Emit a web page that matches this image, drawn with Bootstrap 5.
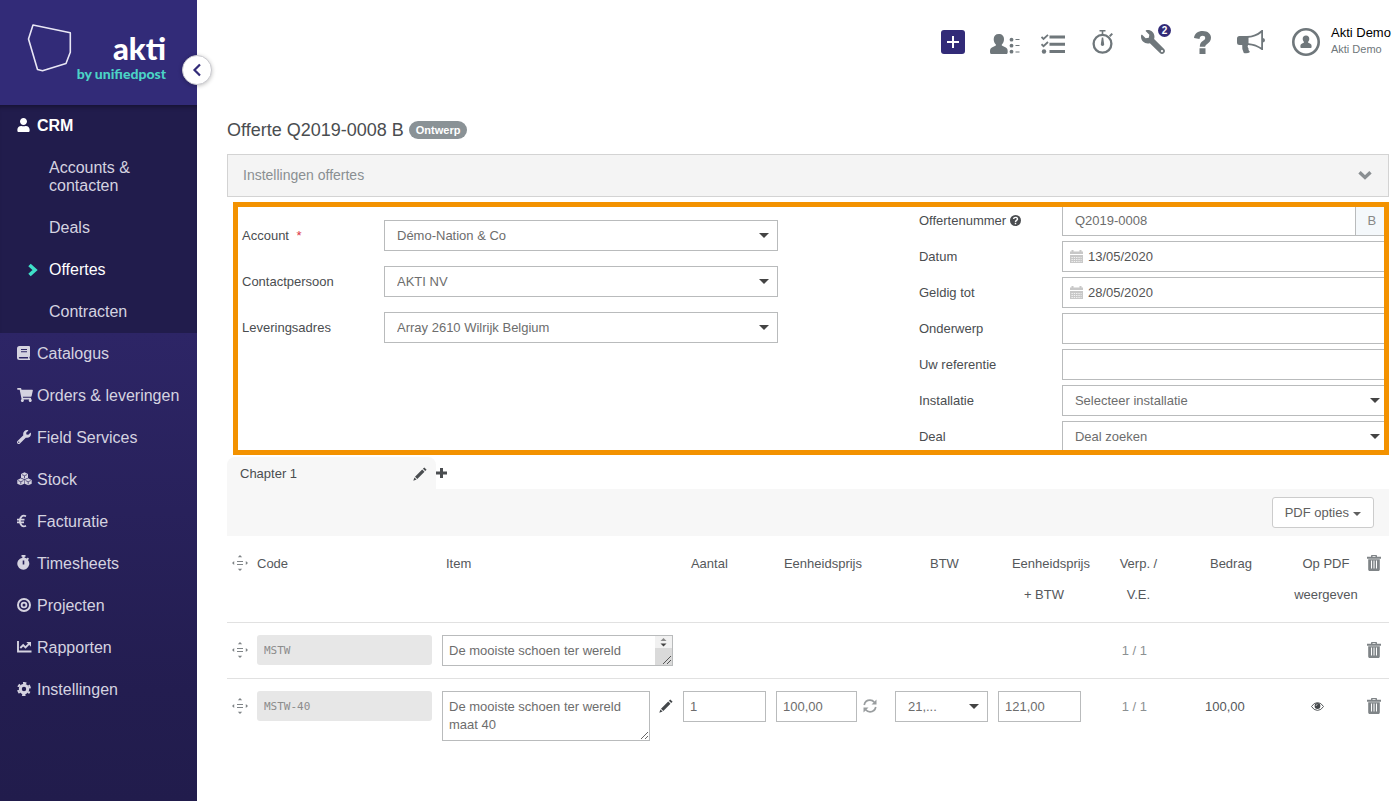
<!DOCTYPE html>
<html lang="nl">
<head>
<meta charset="utf-8">
<meta name="viewport" content="width=device-width, initial-scale=1">
<title>Offerte Q2019-0008 B</title>
<link rel="stylesheet" href="https://cdn.jsdelivr.net/npm/bootstrap@5.3.0/dist/css/bootstrap.min.css">
<style>
  body { font-family: "Liberation Sans", Arial, sans-serif; font-size: 13px; line-height: 18px; color: #4a4d50; background: #fff; }
  svg { display: block; fill: currentColor; }

  /* Sidebar */
  .side { flex: 0 0 197px; background: linear-gradient(#322b78 0, #2d2566 333px, #231d50 690px, #211c4c 100%); font-size: 16px; }
  .side-brand { height: 105px; padding-right: 31px; background: #322b78; color: #fff; font-family: Lato, sans-serif; }
  .brand-shape { left: 27px; top: 23px; }
  .brand-name { padding-top: 30px; font-size: 31px; line-height: 36px; font-weight: 900; }
  .brand-sub { font-size: 14px; line-height: 16px; font-weight: 900; color: #4bd3c6; }
  .side-toggle { left: 182px; top: 55px; width: 30px; height: 30px; color: #322b78; border: 1px solid #c9c9cf; box-shadow: 0 1px 4px rgba(0,0,0,.25); z-index: 2; }
  .side a { display: flex; align-items: center; padding: 12px 10px 12px 17px; color: #d5d3e0; text-decoration: none; }
  .side a svg { flex: none; margin-right: auto; margin-bottom: 3px; }
  .side a span { flex: 0 0 150px; }
  .side-sub { background: #211c4c; box-shadow: inset 0 5px 4px -3px rgba(0,0,0,.35); }
  .side .side-sub a { color: #d5d3e0; }
  .side .side-sub .active { color: #fff; }
  .side .side-sub .side-leaf { padding-left: 27px; }
  .side .side-leaf svg { margin-bottom: 0; }
  .side .side-leaf span { flex-basis: 138px; }
  .side .side-leaf.two-line { padding-right: 50px; }
  .side .side-leaf.two-line span { flex-basis: 98px; }

  /* Top bar */
  .topbar { height: 84px; padding-right: 6px; color: #6f777b; }
  .top-btn { width: 50px; height: 30px; padding: 0; border: 0; background: none; color: inherit; display: flex; align-items: center; justify-content: center; position: relative; }
  .top-plus { width: 24px; height: 24px; background: #322b78; color: #fff; border-radius: 3px; display: grid; place-items: center; }
  .top-count { position: absolute; left: 30px; top: -3px; width: 13px; height: 13px; line-height: 13px; font-size: 10px; background: #322b78; }
  .who { margin-left: 14px; gap: 11px; font-size: 11px; line-height: 16px; color: #6f777b; text-decoration: none; }
  .who span { padding-bottom: 2px; }
  .who b { display: block; font-size: 13px; font-weight: 400; color: #000; line-height: 16px; }

  /* Content */
  .content { padding: 36px 8px 24px 30px; }
  .title { font-size: 18px; line-height: 20px; margin: 0 0 14px; font-weight: 400; color: #4a4d50; }
  .state { font-size: 11px; line-height: 18px; padding: 0 7px; background: #8a9296; margin-left: 5px; }
  .panel-head { height: 43px; padding: 0 16px 2px 15px; background: #f4f4f4; border: 1px solid #d3d3d3; border-radius: 0; color: #8a8f92; font-size: 14px; }
  .frame { margin: 5px 0 2px 6px; border: 5px solid #f39200; overflow: hidden; }
  .frame-grid { display: grid; grid-template-columns: 536fr 141fr 470fr; margin: -2px -5px -2px 4px; }
  .fields { display: grid; align-items: center; align-content: start; }
  .fields-left { grid-template-columns: 142px 1fr; row-gap: 15px; padding-top: 15px; }
  .fields-right { grid-column: 3; grid-template-columns: 143px 1fr; row-gap: 5px; }

  .form-control, .form-select { height: 31px; border: 1px solid #b9bbbc; border-radius: 0; font-size: 13px; line-height: 18px; padding: 5px 12px; color: #6d6d6d; background-color: #fff; }
  .form-select { padding-right: 30px; background-position: right 8px center; background-size: 10px 5px;
    background-image: url("data:image/svg+xml,%3Csvg xmlns='http://www.w3.org/2000/svg' viewBox='0 0 10 5'%3E%3Cpath fill='%23444' d='M0 0h10L5 5z'/%3E%3C/svg%3E"); }
  .input-group-text { width: 34px; padding: 0; justify-content: center; border: 1px solid #b9bbbc; border-radius: 0; background: #f4f8fb; color: #888; font-size: 13px; }
  .date-box .form-control { padding-left: 25px; color: #555; }
  .date-box svg { position: absolute; left: 8px; top: 9px; color: #c8c8c8; }

  /* Chapter tabs */
  .chapter { width: 209px; height: 32px; padding: 2px 9px 0 13px; background: #f7f7f7; border-radius: 8px 8px 0 0; }
  .plain { border: 0; padding: 0; background: none; color: inherit; }
  .toolbar { padding: 8px 15px; background: #f7f7f7; }
  .pdf-btn { height: 31px; padding: 0 12px; font-size: 13px; line-height: 18px; background: #fff; border: 1px solid #ccc; border-radius: 3px; color: #606060; }
  .pdf-btn::after { margin-left: 4px; border-top-width: 4px; border-left-width: 4px; border-right-width: 4px; vertical-align: 1px; }

  /* Lines */
  .lines { width: 100%; table-layout: fixed; color: #55585b; }
  .lines th { font-weight: 400; line-height: 31px; text-align: center; vertical-align: top; padding: 12px 0; }
  .lines th.price-incl { padding-left: 14px; padding-right: 31px; }
  .lines td { padding: 12px 0; vertical-align: top; line-height: 31px; }
  .lines tr { border-bottom: 1px solid #e1e1e1; }
  .lines tbody tr:last-child { border-bottom: 0; }
  .lines svg { color: #7f8487; }
  .lines .cell-icon { display: flex; height: 30px; width: 100%; align-items: center; justify-content: center; }
  .lines .cell-drag { width: 26px; }
  .lines .form-control { padding: 5px 6px; line-height: 18px; }
  .lines td.field { padding-right: 10px; }
  .lines .code { height: 30px; border: 0; border-radius: 3px; background: #e7e7e7; padding: 0 7px; font: 11px "DejaVu Sans Mono", monospace; color: #8c8c8c; }
  .lines textarea.form-control { min-height: 31px; padding-top: 6px; resize: both; }
  .lines textarea.one { height: 31px; padding-bottom: 4px; padding-right: 20px; overflow: hidden; resize: none; }
  .lines textarea.two { height: 50px; width: 208px; padding-bottom: 4px; flex: none; }
  .scroller { position: absolute; top: 1px; right: 1px; bottom: 1px; width: 17px; background: linear-gradient(#f1f1f1 12px, #dadada 12px); }
  .lines .dark svg { color: #43474a; }
  .lines .price { width: 81px; flex: none; }
  .lines .price-wide { width: 83px; }
  .muted { color: #8c9092; }
</style>
</head>
<body>
<svg width="0" height="0" class="position-absolute" aria-hidden="true">
  <symbol id="i-user" viewBox="0 0 448 512"><path d="M224 256c70.700 0 128-57.300 128-128S294.700 0 224 0 96 57.300 96 128s57.300 128 128 128zm89.600 32h-16.700c-22.200 10.200-46.900 16-72.900 16s-50.600-5.800-72.900-16h-16.700C60.200 288 0 348.200 0 422.400V464c0 26.500 21.500 48 48 48h352c26.500 0 48-21.500 48-48v-41.600c0-74.200-60.200-134.400-134.400-134.400z"/></symbol>
  <symbol id="i-wrench" viewBox="0 0 512 512"><path fill-rule="evenodd" d="M507.730 109.100c-2.240-9.030-13.540-12.090-20.120-5.510l-74.360 74.360-67.880-11.310-11.310-67.880 74.360-74.360c6.620-6.620 3.430-17.900-5.660-20.160-47.380-11.740-99.550.91-136.580 37.930-39.640 39.640-50.550 97.100-34.050 147.200L18.740 402.760c-24.990 24.990-24.990 65.510 0 90.500 24.990 24.990 65.510 24.990 90.500 0l213.210-213.210c50.120 16.710 107.470 5.680 147.370-34.220 37.070-37.070 49.700-89.320 37.910-136.730zM64 472c-13.250 0-24-10.750-24-24 0-13.260 10.750-24 24-24s24 10.740 24 24c0 13.250-10.750 24-24 24z"/></symbol>
  <symbol id="i-chev" viewBox="0 0 12 14"><path d="M2.500 2l5.500 5-5.500 5" fill="none" stroke="currentColor" stroke-width="3.600"/></symbol>
  <symbol id="i-pencil" viewBox="0 0 14 14"><path d="M11.300.4l2.300 2.300-1.400 1.400L9.900 1.800zM9.200 2.500l2.300 2.300L4.300 12 2 9.700zM1.400 10.400l2.200 2.200L.3 13.700z"/></symbol>
  <symbol id="i-cal" viewBox="0 0 13 13"><path d="M0 1.500h1.500V0h2v1.500h6V0h2v1.500H13V4H0zM0 5h13v8H0z"/><path d="M1.500 7.500h10M1.500 9.500h10M1.500 11.500h10" stroke="#fff" stroke-width=".8" stroke-dasharray="1.300 1"/></symbol>
  <symbol id="i-trash" viewBox="0 0 14 16"><path d="M4 1.800V.8C4 .3 4.400 0 4.800 0h4.400c.5 0 .8.300.8.800v1h4v1.900H0V1.800zM5.500 1.800h3V1.100h-3zM1.200 4.300h11.600v10.200c0 .8-.6 1.500-1.500 1.500H2.700c-.8 0-1.500-.7-1.500-1.500z" fill-rule="evenodd"/><path d="M4.500 5.500v8M7 5.500v8M9.500 5.500v8" stroke="#fff" stroke-width="1"/></symbol>
  <symbol id="i-move" viewBox="0 0 16 16"><path d="M8 0l2.200 2.200H5.800zM8 16l2.200-2.200H5.800zM0 8l2.200-2v4zM16 8l-2.200-2v4zM5 6h6v1H5zM5 9h6v1H5z"/></symbol>
</svg>

<div class="d-flex min-vh-100 position-relative">
  <nav class="side">
    <div class="side-brand position-relative text-end">
      <svg class="brand-shape position-absolute" width="46" height="52" viewBox="27 23 46 52"><path d="M33 25l37.300 7.800v19.400L66 63.500 42.500 70.800l-5-1.300L28.500 39z" fill="none" stroke="#e9e7f5" stroke-width="1.600" stroke-linejoin="round"/></svg>
      <div class="brand-name">akti</div>
      <div class="brand-sub">by unifiedpost</div>
    </div>
    <button class="side-toggle position-absolute rounded-circle bg-white p-0 d-flex align-items-center justify-content-center" aria-label="Menu inklappen"><svg width="10" height="14" viewBox="0 0 10 14"><path d="M8 1.500L2.500 7 8 12.500" fill="none" stroke="currentColor" stroke-width="2.200"/></svg></button>
    <div class="side-sub">
      <a href="#" class="active fw-bold"><svg width="13" height="14"><use href="#i-user"/></svg><span>CRM</span></a>
      <a href="#" class="side-leaf two-line justify-content-end"><span>Accounts &amp; contacten</span></a>
      <a href="#" class="side-leaf justify-content-end"><span>Deals</span></a>
      <a href="#" class="side-leaf active"><svg width="12" height="14" style="color:#3fe0c8"><use href="#i-chev"/></svg><span>Offertes</span></a>
      <a href="#" class="side-leaf justify-content-end"><span>Contracten</span></a>
    </div>
    <a href="#"><svg width="13" height="14" viewBox="0 0 13 14"><path fill-rule="evenodd" d="M2.500 0H12q1 0 1 1v9q0 .6-.5.900v1.600h.5V14H2.500Q0 14 0 11.500v-9Q0 0 2.500 0zM4 3v1h6V3zm0 2.200v1h6v-1zM2.600 10.900q-.8.100-.8.800t.8.800H11v-1.600z"/></svg><span>Catalogus</span></a>
    <a href="#"><svg width="16" height="14" viewBox="0 0 576 512"><path d="M528.120 301.319l47.273-208C578.806 78.301 567.391 64 551.990 64H159.208l-9.166-44.810C147.758 8.021 137.930 0 126.529 0H24C10.745 0 0 10.745 0 24v16c0 13.255 10.745 24 24 24h69.883l70.248 343.435C147.325 417.100 136 435.222 136 456c0 30.928 25.072 56 56 56s56-25.072 56-56c0-15.674-6.447-29.835-16.824-40h209.647C430.447 426.165 424 440.326 424 456c0 30.928 25.072 56 56 56s56-25.072 56-56c0-22.172-12.888-41.332-31.579-50.405l5.517-24.276c3.413-15.018-8.002-29.319-23.403-29.319H218.117l-6.545-32h293.145c11.206 0 20.920-7.754 23.403-18.681z"/></svg><span>Orders &amp; leveringen</span></a>
    <a href="#"><svg width="14" height="14"><use href="#i-wrench"/></svg><span>Field Services</span></a>
    <a href="#"><svg width="15" height="14" viewBox="0 0 15 14"><g id="cube"><path d="M7.500.3L11 1.900v3.800L7.500 7.300 4 5.700V1.900z"/><path d="M4.900 2.600l2.600 1.100 2.600-1.100M7.500 3.900v2.400" fill="none" stroke="#28215c" stroke-width=".7"/></g><use href="#cube" x="-3.700" y="6"/><use href="#cube" x="3.700" y="6"/></svg><span>Stock</span></a>
    <a href="#"><svg width="10" height="14" viewBox="0 0 10 14"><path d="M9 2.300C5.500.5 2.900 3 2.900 7s2.600 6.500 6.100 4.700M0 5.600h7.500M0 8.300h7" fill="none" stroke="currentColor" stroke-width="1.800"/></svg><span>Facturatie</span></a>
    <a href="#"><svg width="13" height="15" viewBox="0 0 13 15"><path fill-rule="evenodd" d="M4.500 0h4v1.700H7.600v1q1.200.2 2.200.9l1-1 1.200 1.200-1 1.100A6 6 0 1 1 5.400 2.700v-1h-.9zM5.700 5.500v4h1.600v-4z"/></svg><span>Timesheets</span></a>
    <a href="#"><svg width="14" height="14" viewBox="0 0 14 14"><g fill="none" stroke="currentColor"><circle cx="7" cy="7" r="6" stroke-width="2"/><circle cx="7" cy="7" r="2.400" stroke-width="1.800"/></g></svg><span>Projecten</span></a>
    <a href="#"><svg width="15" height="14" viewBox="0 0 15 14"><path d="M1 1v10.500h13.500M3.300 8l2.900-2.900 2.300 2.300L12 3.900" fill="none" stroke="currentColor" stroke-width="1.900"/><path d="M9.300 2H14v4.700z"/></svg><span>Rapporten</span></a>
    <a href="#"><svg width="14" height="14" viewBox="0 0 14 14"><g fill="none" stroke="currentColor"><circle cx="7" cy="7" r="3.700" stroke-width="3"/><circle cx="7" cy="7" r="6" stroke-width="2" stroke-dasharray="3.200 3.083" stroke-dashoffset="1.600" transform="rotate(30 7 7)"/></g></svg><span>Instellingen</span></a>
  </nav>

  <main class="flex-grow-1 overflow-hidden">
    <header class="topbar d-flex align-items-center justify-content-end">
      <button class="top-btn" aria-label="Nieuw"><span class="top-plus"><svg width="12" height="12" viewBox="0 0 12 12"><path d="M5 0h2v5h5v2H7v5H5V7H0V5h5z"/></svg></span></button>
      <button class="top-btn pt-1 ps-1" aria-label="Contacten"><svg width="30" height="20" viewBox="0 0 30 20"><path d="M8.800 0c3.300 0 5.200 2 5.200 5.200 0 2.200-.8 4-2.200 5.200v1.100l4 1.900c1.500.8 1.900 1.800 1.900 4.300 0 1.700-.5 2.300-1.600 2.300H1.600C.5 20 0 19.400 0 17.700c0-2.500.4-3.500 1.900-4.300l4-1.900v-1.100C4.500 9.200 3.700 7.400 3.700 5.200 3.700 2 5.500 0 8.800 0z"/><circle cx="21.500" cy="5.700" r="1.900"/><circle cx="21.500" cy="11.700" r="1.900"/><circle cx="21.500" cy="17.700" r="1.900"/><path d="M25.500 5h4v1h-4zM25.500 11h4v1h-4zM25.500 17.500h4v1h-4z"/></svg></button>
      <button class="top-btn pt-1" aria-label="Taken"><svg width="24" height="20" viewBox="0 0 24 20"><path d="M8.500 1.500H24v3H8.500zM8.500 8.700H24v3H8.500zM8.500 16H24v3H8.500z"/><circle cx="3" cy="17.500" r="2.200"/><path d="M.5 3l2 2L7 .8M.5 10.200l2 2L7 8" fill="none" stroke="currentColor" stroke-width="1.800"/></svg></button>
      <button class="top-btn" aria-label="Timer"><svg width="22" height="24" viewBox="0 0 22 24"><circle cx="10.500" cy="13.800" r="8.900" fill="none" stroke="currentColor" stroke-width="2.300"/><path d="M7.500 0h6v1.600h-2.200V5H9.700V1.600H7.500zM17 5.500l2.600-2.600 1.400 1.400-2.600 2.600zM9.800 7.500h1.400l.9 6.300a1.700 1.700 0 1 1-3.200 0z"/></svg></button>
      <button class="top-btn" aria-label="Meldingen"><svg width="24" height="24" viewBox="0 0 512 512"><use href="#i-wrench" width="512" height="512" transform="matrix(-1 0 0 1 512 0)"/></svg><span class="top-count badge rounded-circle p-0">2</span></button>
      <button class="top-btn" aria-label="Help"><svg width="18" height="23" viewBox="0 0 18 23"><path d="M0 7C.6 2.300 3.900 0 8.700 0 13.800 0 17 2.800 17 6.800c0 3.200-1.800 4.700-3.800 6.200-1.500 1.100-2 1.700-2 2.700H5.800c0-3.200 1.300-4.500 3.300-6 1.500-1.100 2.100-1.700 2.100-2.800 0-1.300-.9-2.100-2.500-2.100-1.900 0-2.900 1.100-3.200 3.100zM5.500 17.300h6V23h-6z"/></svg></button>
      <button class="top-btn pe-1" aria-label="Nieuws"><svg width="28" height="24" viewBox="0 0 28 24"><path fill-rule="evenodd" d="M26 0v8q2 .5 2 2.300T26 12.600V20h-1.300Q19 15.500 11 15q-1 1.700.5 3.600-.7 1.500 1.500 3.400-2.500 1.800-6.200.9Q4.700 19 5.200 15H2.500Q0 15 0 12.500V8.500Q0 6 2.500 6H10Q18 6 24.700 0zM24.200 3Q18.500 7.300 11.500 7.800v5.400q7 .6 12.700 4.300z"/></svg></button>
      <a href="#" class="who d-flex align-items-center"><svg width="28" height="28" viewBox="0 0 28 28"><circle cx="14" cy="14" r="12.700" fill="none" stroke="currentColor" stroke-width="2.600"/><path d="M14 7.500c2.200 0 3.300 1.400 3.300 3.300 0 1.300-.5 2.400-1.300 3.200v.6l2.300 1.100c1 .5 1.300 1.300 1.300 2.700 0 1-.3 1.600-1.200 1.600H9.600c-.9 0-1.200-.6-1.200-1.600 0-1.400.3-2.200 1.300-2.700l2.300-1.100V14c-.8-.8-1.300-1.900-1.300-3.200 0-1.900 1.100-3.300 3.300-3.300z"/></svg><span><b>Akti Demo</b>Akti Demo</span></a>
    </header>

    <div class="content">
      <h1 class="title d-flex align-items-center">Offerte Q2019-0008 B <span class="state badge rounded-pill">Ontwerp</span></h1>
      <button class="panel-head w-100 d-flex align-items-center justify-content-between">Instellingen offertes <svg width="14" height="10" viewBox="0 0 14 10"><path d="M1.500 2.200L7 7.500l5.500-5.300" fill="none" stroke="currentColor" stroke-width="3.400"/></svg></button>

      <form class="frame">
        <div class="frame-grid">
          <div class="fields fields-left">
            <label for="account">Account <span class="text-danger ms-1">*</span></label>
            <select id="account" class="form-select"><option>Démo-Nation &amp; Co</option></select>
            <label for="contact">Contactpersoon</label>
            <select id="contact" class="form-select"><option>AKTI NV</option></select>
            <label for="adres">Leveringsadres</label>
            <select id="adres" class="form-select"><option>Array 2610 Wilrijk Belgium</option></select>
          </div>
          <div class="fields fields-right">
            <label for="nummer" class="d-flex align-items-center">Offertenummer <svg class="ms-1" width="11" height="11" viewBox="0 0 12 12"><circle cx="6" cy="6" r="6"/><path d="M3.900 4.400C4.200 2 8.200 2 8.200 4.400 8.200 6 6 5.800 6 7.600M6 8.500v1.700" fill="none" stroke="#fff" stroke-width="1.600"/></svg></label>
            <div class="input-group flex-nowrap"><input id="nummer" class="form-control" value="Q2019-0008"><span class="input-group-text">B</span></div>
            <label for="datum">Datum</label>
            <div class="date-box position-relative"><input id="datum" class="form-control" value="13/05/2020"><svg width="13" height="13"><use href="#i-cal"/></svg></div>
            <label for="geldig">Geldig tot</label>
            <div class="date-box position-relative"><input id="geldig" class="form-control" value="28/05/2020"><svg width="13" height="13"><use href="#i-cal"/></svg></div>
            <label for="onderwerp">Onderwerp</label>
            <input id="onderwerp" class="form-control">
            <label for="referentie">Uw referentie</label>
            <input id="referentie" class="form-control">
            <label for="installatie">Installatie</label>
            <select id="installatie" class="form-select"><option>Selecteer installatie</option></select>
            <label for="deal">Deal</label>
            <select id="deal" class="form-select"><option>Deal zoeken</option></select>
          </div>
        </div>
      </form>

      <div class="d-flex align-items-center">
        <div class="chapter d-flex align-items-center justify-content-between">Chapter 1 <button class="plain" aria-label="Hoofdstuk bewerken"><svg width="14" height="14"><use href="#i-pencil"/></svg></button></div>
        <button class="plain" aria-label="Hoofdstuk toevoegen"><svg width="11" height="10" viewBox="0 0 11 10"><path d="M4 0h3v3.500h4v3H7V10H4V6.500H0v-3h4z"/></svg></button>
      </div>
      <div class="toolbar d-flex justify-content-end">
        <button class="pdf-btn btn dropdown-toggle">PDF opties</button>
      </div>

      <table class="lines">
        <colgroup>
          <col style="width:30px"><col style="width:185px"><col><col style="width:93px"><col style="width:119px"><col style="width:103px"><col style="width:109px"><col style="width:63px"><col style="width:106px"><col style="width:84px"><col style="width:29px">
        </colgroup>
        <thead>
          <tr>
            <th><span class="cell-icon cell-drag"><svg width="16" height="16"><use href="#i-move"/></svg></span></th>
            <th class="text-start">Code</th>
            <th class="text-start ps-1">Item</th>
            <th class="text-start ps-2">Aantal</th>
            <th class="text-start ps-2">Eenheidsprijs</th>
            <th class="pe-1">BTW</th>
            <th class="price-incl">Eenheidsprijs + BTW</th>
            <th class="px-2">Verp. / V.E.</th>
            <th class="ps-3">Bedrag</th>
            <th class="ps-3">Op PDF weergeven</th>
            <th><button class="plain cell-icon" aria-label="Alles verwijderen"><svg width="14" height="16"><use href="#i-trash"/></svg></button></th>
          </tr>
        </thead>
        <tbody>
          <tr>
            <td><span class="cell-icon cell-drag"><svg width="16" height="16"><use href="#i-move"/></svg></span></td>
            <td class="field"><input class="form-control code" value="MSTW" aria-label="Code" readonly></td>
            <td class="field"><div class="position-relative"><textarea class="form-control one d-block" rows="1" aria-label="Item">De mooiste schoen ter wereld</textarea><span class="scroller"><svg width="17" height="29" viewBox="0 0 17 29"><path d="M5.500 5L8.500 2l3 3z" fill="#8a8a8a"/><path d="M5.500 7.500h6l-3 3z" fill="#444"/><path d="M8 28l8-8M12 28l4-4" stroke="#555" stroke-width="1"/></svg></span></div></td>
            <td></td><td></td><td></td><td></td>
            <td class="muted text-center pe-2">1 / 1</td>
            <td></td><td></td>
            <td><button class="plain cell-icon" aria-label="Verwijderen"><svg width="14" height="16"><use href="#i-trash"/></svg></button></td>
          </tr>
          <tr>
            <td><span class="cell-icon cell-drag"><svg width="16" height="16"><use href="#i-move"/></svg></span></td>
            <td class="field"><input class="form-control code" value="MSTW-40" aria-label="Code" readonly></td>
            <td><div class="d-flex dark"><textarea class="form-control two" rows="2" aria-label="Item">De mooiste schoen ter wereld maat 40</textarea><button class="plain cell-icon" aria-label="Item bewerken"><svg width="14" height="14"><use href="#i-pencil"/></svg></button></div></td>
            <td class="field"><input class="form-control" value="1" aria-label="Aantal"></td>
            <td><div class="d-flex"><input class="form-control price" value="100,00" aria-label="Eenheidsprijs"><button class="plain cell-icon pe-2 me-1" aria-label="Herberekenen"><svg width="14" height="14" viewBox="0 0 14 14"><path d="M1.200 6C1.900 2.900 4.300 1.200 7 1.200c1.900 0 3.300.8 4.300 2M12.800 8c-.7 3.100-3.100 4.800-5.800 4.800-1.900 0-3.300-.8-4.300-2" fill="none" stroke="#999d9f" stroke-width="1.700"/><path d="M13.500.5v5h-5zM.5 13.500v-5h5z" fill="#999d9f"/></svg></button></div></td>
            <td class="field"><select class="form-select" aria-label="BTW"><option>21,...</option></select></td>
            <td><input class="form-control price-wide" value="121,00" aria-label="Eenheidsprijs + BTW"></td>
            <td class="muted text-center pe-2">1 / 1</td>
            <td class="text-center ps-1">100,00</td>
            <td><button class="plain cell-icon dark" aria-label="Op PDF weergeven"><svg width="13" height="9" viewBox="0 0 13 9"><path d="M.5 4.500Q2.900.6 6.500.6t6 3.900Q10.100 8.400 6.500 8.400T.5 4.500z" fill="none" stroke="currentColor" stroke-width=".9"/><circle cx="6.500" cy="4" r="2.900"/><path d="M5 4q0-1.500 1.500-1.500" fill="none" stroke="#fff" stroke-width=".6"/></svg></button></td>
            <td><button class="plain cell-icon" aria-label="Verwijderen"><svg width="14" height="16"><use href="#i-trash"/></svg></button></td>
          </tr>
        </tbody>
      </table>
    </div>
  </main>
</div>
<script src="https://cdn.jsdelivr.net/npm/bootstrap@5.3.0/dist/js/bootstrap.bundle.min.js"></script>
</body>
</html>
